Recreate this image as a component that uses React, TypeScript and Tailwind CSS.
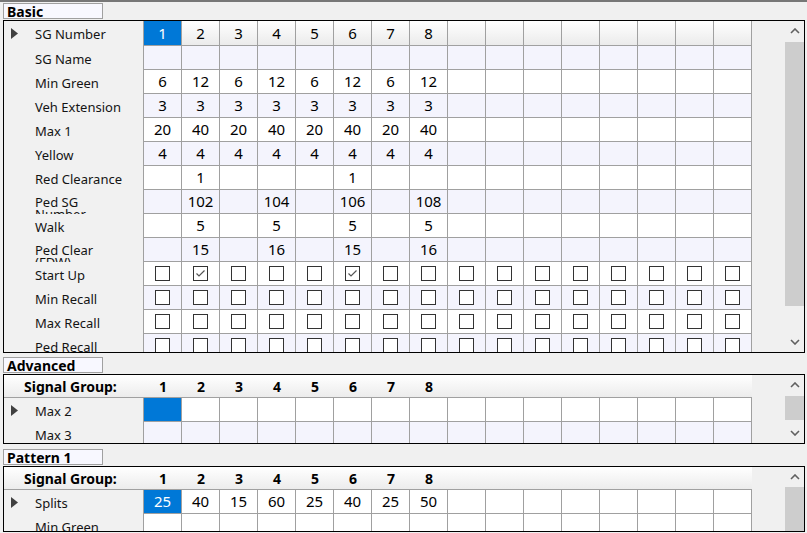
import React from "react";

const NCOLS = 16;

type RowBg = "head" | "white" | "lav";

type GridRow = {
  label: string;
  sub?: string;
  arrow?: boolean;
  bg: RowBg;
  values?: string[];
  checks?: boolean[];
  selected?: number;
  h?: string;
};

function Arrow() {
  return (
    <svg width="7" height="11" viewBox="0 0 7 11">
      <polygon points="0,0 7,5.5 0,11" fill="#404040" />
    </svg>
  );
}

function Chevron({ down }: { down?: boolean }) {
  return (
    <svg width="10" height="6" viewBox="0 0 10 6">
      <polyline
        points={down ? "1,1 5,5 9,1" : "1,5 5,1 9,5"}
        fill="none"
        stroke="#606060"
        strokeWidth="1.6"
      />
    </svg>
  );
}

function CheckBox({ checked }: { checked?: boolean }) {
  return (
    <div className="w-[15px] h-[15px] border border-[#333333] bg-white flex items-center justify-center">
      {checked && (
        <svg width="11" height="9" viewBox="0 0 11 9">
          <polyline points="1.5,4.5 4,7 9.5,1.5" fill="none" stroke="#555555" strokeWidth="1.2" />
        </svg>
      )}
    </div>
  );
}

function LabelCell({ row }: { row: GridRow }) {
  return (
    <div className="w-[140px] shrink-0 h-full border-r border-[#a0a0a0] bg-[#f1f1f1] flex overflow-hidden text-[13px] text-[#141414]">
      <div className="w-[31px] shrink-0 flex items-center pl-[7px]">{row.arrow && <Arrow />}</div>
      {row.sub ? (
        <div className="pt-[6px] leading-[12px] whitespace-nowrap">
          {row.label}
          <br />
          {row.sub}
        </div>
      ) : (
        <div className="pt-[6px] leading-[14px] whitespace-nowrap">{row.label}</div>
      )}
    </div>
  );
}

function DataRow({ row }: { row: GridRow }) {
  const bg =
    row.bg === "head"
      ? "bg-linear-to-b from-white to-[#ebebeb]"
      : row.bg === "lav"
      ? "bg-[#f4f4fd]"
      : "bg-white";
  return (
    <div className={`flex shrink-0 ${row.h ?? "h-[24px]"}`}>
      <LabelCell row={row} />
      {Array.from({ length: NCOLS }).map((_, i) => {
        const sel = row.selected === i;
        return (
          <div
            key={i}
            className={`w-[38px] shrink-0 h-full border-r border-b border-[#a0a0a0] flex items-center justify-center text-[15px] ${
              sel ? "bg-[#0078d7] text-white" : `${bg} text-black`
            }`}
          >
            {row.checks ? <CheckBox checked={row.checks[i]} /> : row.values?.[i] ?? ""}
          </div>
        );
      })}
      <div className="flex-1 bg-[#f0f0f0]" />
    </div>
  );
}

function HeaderRow({ count }: { count: number }) {
  return (
    <div className="flex shrink-0 h-[23px]">
      <div className="w-[748px] shrink-0 flex border-b border-[#a0a0a0] bg-linear-to-b from-white to-[#ececec] font-bold text-[14px] text-black">
        <div className="w-[140px] shrink-0 pl-[20px] flex items-center">Signal Group:</div>
        {Array.from({ length: count }).map((_, i) => (
          <div key={i} className="w-[38px] shrink-0 flex items-center justify-center">
            {i + 1}
          </div>
        ))}
      </div>
      <div className="flex-1 bg-[#f0f0f0]" />
    </div>
  );
}

function ScrollBar({
  thumbTop,
  thumbH,
  down,
}: {
  thumbTop: string;
  thumbH: string;
  down?: boolean;
}) {
  return (
    <div className="w-[19px] shrink-0 h-full bg-[#f0f0f0] flex flex-col">
      <div className="h-[20px] shrink-0 flex items-center justify-center">
        <Chevron />
      </div>
      <div className={`shrink-0 bg-[#cdcdcd] ${thumbTop} ${thumbH}`} />
      {down && (
        <div className="mt-auto h-[21px] shrink-0 flex items-center justify-center">
          <Chevron down />
        </div>
      )}
    </div>
  );
}

function GroupLabel({ text, mt }: { text: string; mt: string }) {
  return (
    <div
      className={`${mt} ml-[3px] w-[100px] h-[16px] shrink-0 border border-[#a0a0a0] bg-[#f8f8ff] pl-[3px] font-bold text-[14px] leading-[16px] text-black overflow-visible whitespace-nowrap`}
    >
      {text}
    </div>
  );
}

const eight = (vals: string[]) => [...vals, ...Array(NCOLS - vals.length).fill("")];
const e = "";

const basicRows: GridRow[] = [
  { label: "SG Number", arrow: true, bg: "head", values: eight(["1", "2", "3", "4", "5", "6", "7", "8"]), selected: 0, h: "h-[25px]" },
  { label: "SG Name", bg: "lav", values: [] },
  { label: "Min Green", bg: "white", values: eight(["6", "12", "6", "12", "6", "12", "6", "12"]) },
  { label: "Veh Extension", bg: "lav", values: eight(["3", "3", "3", "3", "3", "3", "3", "3"]) },
  { label: "Max 1", bg: "white", values: eight(["20", "40", "20", "40", "20", "40", "20", "40"]) },
  { label: "Yellow", bg: "lav", values: eight(["4", "4", "4", "4", "4", "4", "4", "4"]) },
  { label: "Red Clearance", bg: "white", values: eight([e, "1", e, e, e, "1", e, e]) },
  { label: "Ped SG", sub: "Number", bg: "lav", values: eight([e, "102", e, "104", e, "106", e, "108"]) },
  { label: "Walk", bg: "white", values: eight([e, "5", e, "5", e, "5", e, "5"]) },
  { label: "Ped Clear", sub: "(FDW)", bg: "lav", values: eight([e, "15", e, "16", e, "15", e, "16"]) },
  { label: "Start Up", bg: "white", checks: Array.from({ length: NCOLS }, (_, i) => i === 1 || i === 5) },
  { label: "Min Recall", bg: "lav", checks: Array(NCOLS).fill(false) },
  { label: "Max Recall", bg: "white", checks: Array(NCOLS).fill(false) },
  { label: "Ped Recall", bg: "lav", checks: Array(NCOLS).fill(false) },
];

const advancedRows: GridRow[] = [
  { label: "Max 2", arrow: true, bg: "white", values: [], selected: 0 },
  { label: "Max 3", bg: "lav", values: [] },
];

const patternRows: GridRow[] = [
  { label: "Splits", arrow: true, bg: "white", values: eight(["25", "40", "15", "60", "25", "40", "25", "50"]), selected: 0 },
  { label: "Min Green", bg: "white", values: [] },
];

export default function App() {
  return (
    <div className="w-[807px] h-[533px] overflow-hidden bg-[#f0f0f0] border-t-2 border-[#777777] flex flex-col font-['Noto_Sans',sans-serif]">
      <GroupLabel text="Basic" mt="mt-[1px]" />
      <div className="mt-[1px] ml-[3px] w-[802px] h-[333px] shrink-0 border border-black flex overflow-hidden">
        <div className="w-[781px] shrink-0 flex flex-col overflow-hidden">
          {basicRows.map((r) => (
            <DataRow key={r.label} row={r} />
          ))}
        </div>
        <ScrollBar thumbTop="mt-[1px]" thumbH="h-[264px]" down />
      </div>

      <GroupLabel text="Advanced" mt="mt-[4px]" />
      <div className="mt-[1px] ml-[3px] w-[802px] h-[70px] shrink-0 border border-black flex overflow-hidden">
        <div className="w-[781px] shrink-0 flex flex-col overflow-hidden">
          <HeaderRow count={8} />
          {advancedRows.map((r) => (
            <DataRow key={r.label} row={r} />
          ))}
        </div>
        <ScrollBar thumbTop="mt-[1px]" thumbH="h-[24px]" down />
      </div>

      <GroupLabel text="Pattern 1" mt="mt-[5px]" />
      <div className="mt-[1px] ml-[3px] w-[802px] h-[66px] shrink-0 border border-black flex overflow-hidden">
        <div className="w-[781px] shrink-0 flex flex-col overflow-hidden">
          <HeaderRow count={8} />
          {patternRows.map((r) => (
            <DataRow key={r.label} row={r} />
          ))}
        </div>
        <ScrollBar thumbTop="mt-0" thumbH="flex-1" />
      </div>
    </div>
  );
}
